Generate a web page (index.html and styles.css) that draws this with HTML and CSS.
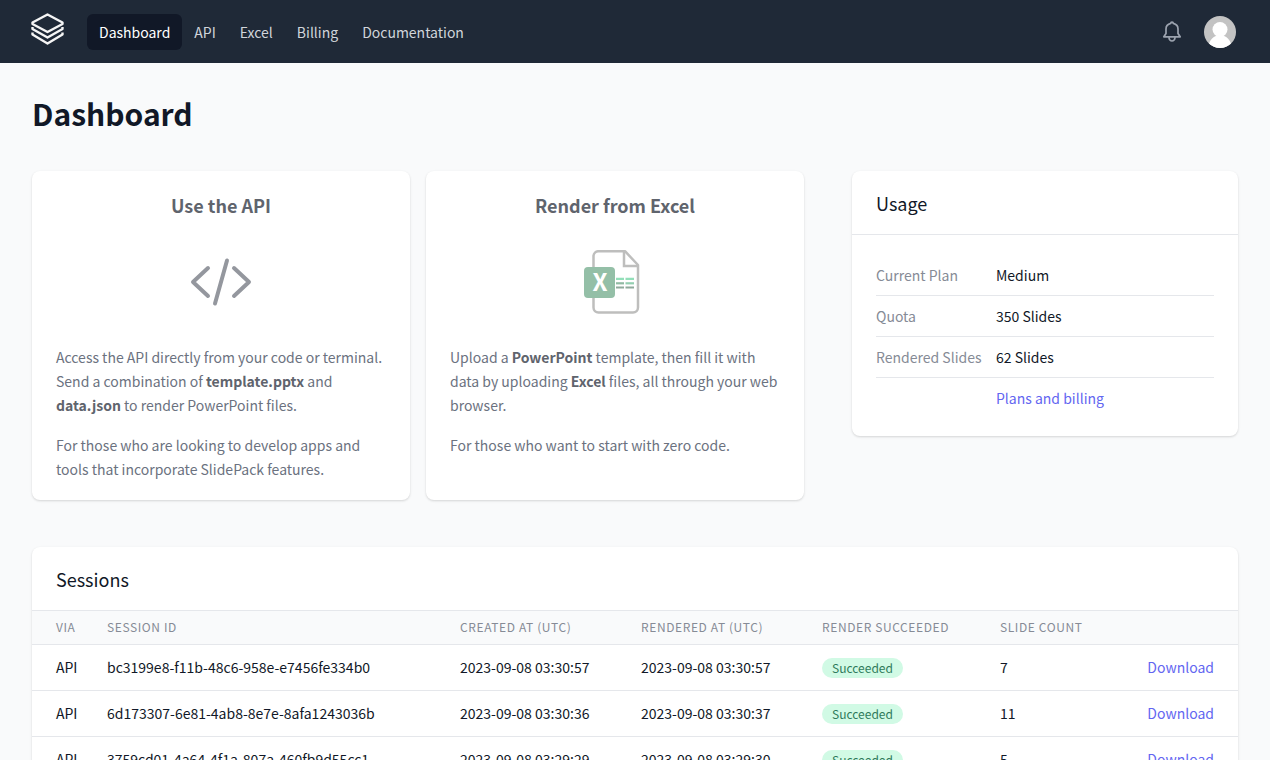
FILE: index.html
```html
<!DOCTYPE html>
<html lang="en">
<head>
    <meta charset="UTF-8">
    <meta name="viewport" content="width=device-width, initial-scale=1.0">
    <title>Dashboard - SlidePack</title>
    <link rel="stylesheet" href="styles.css">
</head>
<body>
    <header class="navbar">
        <a class="logo" href="#" aria-label="SlidePack">
            <svg width="33" height="33" viewBox="0 0 33 33" fill="none" stroke="#f5f5f5" stroke-width="2.400" stroke-linejoin="round">
                <path d="M16.500 1.500L31.500 9.500V11L16.500 19L1.500 11V9.500Z"/>
                <path d="M1.500 14V16L16.500 24.500L31.500 16V14"/>
                <path d="M1.500 19.500V21.500L16.500 30.500L31.500 21.500V19.500"/>
            </svg>
        </a>
        <nav class="nav-links">
            <a class="nav-link active" href="#">Dashboard</a>
            <a class="nav-link" href="#">API</a>
            <a class="nav-link" href="#">Excel</a>
            <a class="nav-link" href="#">Billing</a>
            <a class="nav-link" href="#">Documentation</a>
        </nav>
        <div class="nav-actions">
            <button class="icon-button" type="button" aria-label="Notifications">
                <svg width="20" height="22" viewBox="0 0 20 22" fill="none" stroke="#9ca3af" stroke-width="1.700" stroke-linecap="round" stroke-linejoin="round">
                    <path d="M1.800 15.800H18.200L16 12.500V8C16 5 13.800 3 11.300 2.400A1.300 1.300 0 0 0 8.700 2.400C6.200 3 4 5 4 8V12.500Z"/>
                    <path d="M7 16.500A3 3.500 0 0 0 13 16.500"/>
                </svg>
            </button>
            <button class="icon-button" type="button" aria-label="Account">
                <svg class="avatar" width="32" height="32" viewBox="0 0 32 32">
                    <rect width="32" height="32" fill="#c3c3c3"/>
                    <circle cx="16" cy="13.500" r="7.500" fill="#fff"/>
                    <path d="M4 32C5 24 10 19 16 19S27 24 28 32Z" fill="#fff"/>
                </svg>
            </button>
        </div>
    </header>

    <main class="page">
        <h1>Dashboard</h1>

        <div class="overview">
            <div class="intros">
                <section class="card intro">
                    <h2>Use the API</h2>
                    <div class="intro-icon">
                        <svg width="62" height="48" viewBox="0 0 62 48" fill="none" stroke="#94979e" stroke-width="4" stroke-linecap="round" stroke-linejoin="round">
                            <path d="M18 10L3 24L18 38"/>
                            <path d="M37 2.500L25 45.500"/>
                            <path d="M44 10L59 24L44 38"/>
                        </svg>
                    </div>
                    <p>Access the API directly from your code or terminal. Send a combination of <strong>template.pptx</strong> and <strong>data.json</strong> to render PowerPoint files.</p>
                    <p>For those who are looking to develop apps and tools that incorporate SlidePack features.</p>
                </section>

                <section class="card intro">
                    <h2>Render from Excel</h2>
                    <div class="intro-icon">
                        <svg width="62" height="64" viewBox="2 0 62 64" fill="none">
                            <path d="M43 1.200H16.500A5 5 0 0 0 11.500 6V57.500A5 5 0 0 0 16.500 62.500H51A5 5 0 0 0 56 57.500V15Z" stroke="#bebebd" stroke-width="2.500" stroke-linejoin="round"/>
                            <path d="M42 2V16H55.500" stroke="#bebebd" stroke-width="2.500"/>
                            <rect x="2" y="17" width="31" height="31" rx="4" fill="#94bfa7"/>
                            <text class="excel-mark" x="18" y="41" text-anchor="middle">X</text>
                            <path d="M34 28.800H42M43.500 28.800H52" stroke="#93dfb9" stroke-width="2.200"/>
                            <path d="M34 33.300H42" stroke="#90baa3" stroke-width="2.200"/>
                            <path d="M43.500 33.300H52" stroke="#93cfb0" stroke-width="2.200"/>
                            <path d="M34 37.500H42M43.500 37.500H52" stroke="#8fa99b" stroke-width="2.200"/>
                        </svg>
                    </div>
                    <p>Upload a <strong>PowerPoint</strong> template, then fill it with data by uploading <strong>Excel</strong> files, all through your web browser.</p>
                    <p>For those who want to start with zero code.</p>
                </section>
            </div>

            <section class="card usage">
                <h2 class="card-header">Usage</h2>
                <dl class="usage-list">
                    <div class="usage-row">
                        <dt>Current Plan</dt>
                        <dd>Medium</dd>
                    </div>
                    <div class="usage-row">
                        <dt>Quota</dt>
                        <dd>350 Slides</dd>
                    </div>
                    <div class="usage-row">
                        <dt>Rendered Slides</dt>
                        <dd>62 Slides</dd>
                    </div>
                    <div class="usage-row">
                        <dt></dt>
                        <dd><a class="link" href="#">Plans and billing</a></dd>
                    </div>
                </dl>
            </section>
        </div>

        <section class="card sessions">
            <h2 class="card-header">Sessions</h2>
            <table>
                <thead>
                    <tr>
                        <th class="col-via">Via</th>
                        <th>Session ID</th>
                        <th class="col-date">Created at (UTC)</th>
                        <th class="col-date">Rendered at (UTC)</th>
                        <th class="col-status">Render succeeded</th>
                        <th class="col-count">Slide count</th>
                        <th class="col-action"></th>
                    </tr>
                </thead>
                <tbody>
                    <tr>
                        <td>API</td>
                        <td>bc3199e8-f11b-48c6-958e-e7456fe334b0</td>
                        <td>2023-09-08 03:30:57</td>
                        <td>2023-09-08 03:30:57</td>
                        <td><span class="badge">Succeeded</span></td>
                        <td>7</td>
                        <td><a class="link" href="#">Download</a></td>
                    </tr>
                    <tr>
                        <td>API</td>
                        <td>6d173307-6e81-4ab8-8e7e-8afa1243036b</td>
                        <td>2023-09-08 03:30:36</td>
                        <td>2023-09-08 03:30:37</td>
                        <td><span class="badge">Succeeded</span></td>
                        <td>11</td>
                        <td><a class="link" href="#">Download</a></td>
                    </tr>
                    <tr>
                        <td>API</td>
                        <td>3759cd01-4a64-4f1a-807a-460fb9d55cc1</td>
                        <td>2023-09-08 03:29:29</td>
                        <td>2023-09-08 03:29:30</td>
                        <td><span class="badge">Succeeded</span></td>
                        <td>5</td>
                        <td><a class="link" href="#">Download</a></td>
                    </tr>
                </tbody>
            </table>
        </section>
    </main>
</body>
</html>
```

FILE: styles.css
```css
* {
    box-sizing: border-box;
}
body {
    margin: 0;
    background: #f9fafb;
    color: #111827;
    font-family: "Noto Sans CJK JP", "Noto Sans", sans-serif;
    font-size: 14px;
    line-height: 24px;
}
h1, h2, p, dl, dd {
    margin: 0;
}
a {
    text-decoration: none;
}

/* top bar */
.navbar {
    display: flex;
    align-items: center;
    height: 63px;
    padding: 0 34px 0 31px;
    background: #1f2937;
}
.logo {
    display: flex;
    margin-right: 23px;
    padding-bottom: 4px;
}
.nav-links {
    display: flex;
}
.nav-link {
    padding: 6px 12px;
    border-radius: 6px;
    color: #d1d5db;
}
.nav-link.active {
    background: #111827;
    color: #fff;
}
.nav-actions {
    display: flex;
    align-items: center;
    gap: 22px;
    margin-left: auto;
}
.icon-button {
    display: flex;
    padding: 0;
    border: none;
    background: none;
    cursor: pointer;
}
.avatar {
    border-radius: 50%;
}

.page {
    padding: 32px;
}
h1 {
    margin-bottom: 40px;
    font-size: 30px;
    line-height: 36px;
}

/* cards */
.card {
    background: #fff;
    border-radius: 8px;
    box-shadow: 0 1px 3px rgba(0, 0, 0, 0.1), 0 1px 2px rgba(0, 0, 0, 0.06);
}
.card-header {
    padding: 18px 24px 17px;
    border-bottom: 1px solid #e5e7eb;
    font-size: 18px;
    font-weight: 400;
    line-height: 28px;
}
.overview {
    display: grid;
    grid-template-columns: 2fr 1fr;
    align-items: start;
    gap: 48px;
    margin-bottom: 47px;
}
.intros {
    display: grid;
    grid-template-columns: 1fr 1fr;
    gap: 16px;
}
.intro {
    padding: 20px 24px 19px;
    color: #6b7280;
}
.intro h2 {
    color: #5f646d;
    font-size: 18px;
    line-height: 28px;
    text-align: center;
}
.intro-icon {
    display: flex;
    align-items: center;
    justify-content: center;
    height: 126px;
}
.intro p + p {
    margin-top: 16px;
}
.intro strong {
    color: #5f646d;
}
.excel-mark {
    fill: #fff;
    font-size: 24px;
    font-weight: 700;
}

.usage-list {
    padding: 20px 24px 18px;
}
.usage-row {
    display: grid;
    grid-template-columns: 120px 1fr;
    padding: 8px 0;
    border-bottom: 1px solid #e5e7eb;
}
.usage-row:last-child {
    border-bottom: none;
}
dt {
    color: #868b96;
}
.link {
    color: #6366f1;
}

/* sessions table */
.sessions {
    overflow: hidden;
}
table {
    width: 100%;
    border-collapse: collapse;
    table-layout: fixed;
}
th, td {
    padding: 0;
    border-bottom: 1px solid #e5e7eb;
    text-align: left;
    white-space: nowrap;
}
th {
    height: 33px;
    background: #f9fafb;
    color: #868b96;
    font-size: 12px;
    font-weight: 400;
    letter-spacing: 0.05em;
    line-height: 16px;
    text-transform: uppercase;
}
td {
    height: 46px;
}
th:first-child, td:first-child {
    padding-left: 24px;
}
th:last-child, td:last-child {
    padding-right: 24px;
    text-align: right;
}
.col-via {
    width: 75px;
}
.col-date {
    width: 181px;
}
.col-status {
    width: 178px;
}
.col-count {
    width: 105px;
}
.col-action {
    width: 133px;
}
.badge {
    display: inline-block;
    padding: 0 10px;
    border-radius: 10px;
    background: #d1fae5;
    color: #2f7a5b;
    font-size: 12px;
    line-height: 20px;
}
```
